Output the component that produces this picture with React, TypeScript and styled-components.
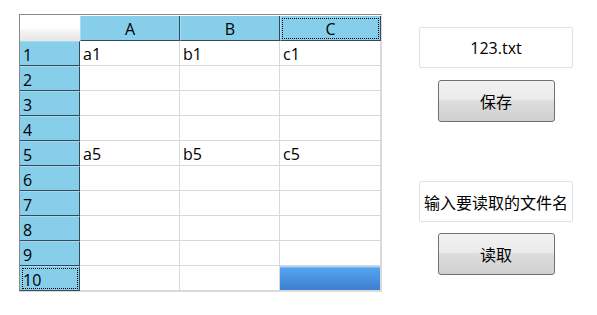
import React from "react";
import styled, { createGlobalStyle, css } from "styled-components";

const Global = createGlobalStyle`
  html, body { margin: 0; padding: 0; background: #fff; }
  body { font-family: "Open Sans", "Noto Sans CJK SC", sans-serif; color: #000; }
`;

const Page = styled.div`
  display: flex;
  align-items: flex-start;
  padding: 14px 0 0 19px;
  width: 597px;
  height: 315px;
  box-sizing: border-box;
`;

const Frame = styled.div`
  border-top: 1px solid #8a8a8a;
  border-left: 1px solid #8a8a8a;
  border-right: 1px solid #dcdcdc;
  border-bottom: 1px solid #dcdcdc;
  padding-top: 1px;
  background: #fff;
`;

const Grid = styled.div`
  display: grid;
  grid-template-columns: 60px 100px 100px 101px;
  grid-template-rows: repeat(11, 25px);
`;

const focus = css`
  outline: 1px dotted #000;
  outline-offset: -3px;
`;

const Corner = styled.div`
  background: linear-gradient(#ffffff 0%, #ffffff 45%, #efefef 70%, #e6e6e6 100%);
`;

const ColHead = styled.div<{ $focused?: boolean }>`
  background: #87ceeb;
  border-right: 1px solid #34495a;
  border-bottom: 1px solid #34495a;
  border-left: 1px solid #aadcf0;
  box-sizing: border-box;
  display: flex;
  align-items: center;
  justify-content: center;
  font-size: 16px;
  line-height: 1;
  padding-top: 1px;
  ${(p) => p.$focused && focus}
`;

const RowHead = styled.div<{ $focused?: boolean }>`
  background: #87ceeb;
  border-right: 1px solid #34495a;
  border-bottom: 1px solid #34495a;
  border-top: 1px solid #a8daee;
  box-sizing: border-box;
  display: flex;
  align-items: center;
  padding: 2px 0 0 3px;
  font-size: 16px;
  line-height: 1;
  ${(p) => p.$focused && focus}
`;

const Cell = styled.div<{ $selected?: boolean }>`
  border-right: 1px solid #d8d8d8;
  border-bottom: 1px solid #d8d8d8;
  box-sizing: border-box;
  display: flex;
  align-items: center;
  padding: 2px 0 0 3px;
  font-size: 16px;
  line-height: 1;
  ${(p) =>
    p.$selected &&
    css`
      background: linear-gradient(#a9d2f6 0px, #a9d2f6 1px, #55a3ee 2px, #4a94e2 50%, #3d7fd0 100%);
    `}
`;

const Panel = styled.div`
  margin-left: 37px;
  margin-top: 13px;
  width: 154px;
  display: flex;
  flex-direction: column;
  align-items: center;
`;

const Input = styled.div<{ $mt: number }>`
  width: 154px;
  height: 41px;
  box-sizing: border-box;
  margin-top: ${(p) => p.$mt}px;
  border: 1px solid #dbe2e8;
  border-radius: 2px;
  display: flex;
  align-items: center;
  justify-content: center;
  font-size: 16px;
  white-space: nowrap;
  font-family: "Open Sans", "Noto Sans CJK SC", sans-serif;
`;

const Button = styled.div<{ $mt: number }>`
  width: 117px;
  height: 42px;
  box-sizing: border-box;
  margin-top: ${(p) => p.$mt}px;
  border: 1px solid #707070;
  border-radius: 3px;
  background: linear-gradient(#f2f2f2 0%, #ebebeb 45%, #dddddd 50%, #d0d0d0 100%);
  display: flex;
  align-items: center;
  justify-content: center;
  font-size: 16px;
  font-family: "Noto Sans CJK SC", sans-serif;
`;

const data: Record<number, string[]> = {
  1: ["a1", "b1", "c1"],
  5: ["a5", "b5", "c5"],
};

export default function App() {
  const rows = Array.from({ length: 10 }, (_, i) => i + 1);
  return (
    <>
      <Global />
      <Page>
        <Frame>
          <Grid>
            <Corner />
            <ColHead>A</ColHead>
            <ColHead>B</ColHead>
            <ColHead $focused>C</ColHead>
            {rows.map((r) => (
              <React.Fragment key={r}>
                <RowHead $focused={r === 10}>{r}</RowHead>
                {[0, 1, 2].map((c) => (
                  <Cell key={c} $selected={r === 10 && c === 2}>
                    {data[r]?.[c] ?? ""}
                  </Cell>
                ))}
              </React.Fragment>
            ))}
          </Grid>
        </Frame>
        <Panel>
          <Input $mt={0}>123.txt</Input>
          <Button $mt={12}>保存</Button>
          <Input $mt={59}>输入要读取的文件名</Input>
          <Button $mt={11}>读取</Button>
        </Panel>
      </Page>
    </>
  );
}
